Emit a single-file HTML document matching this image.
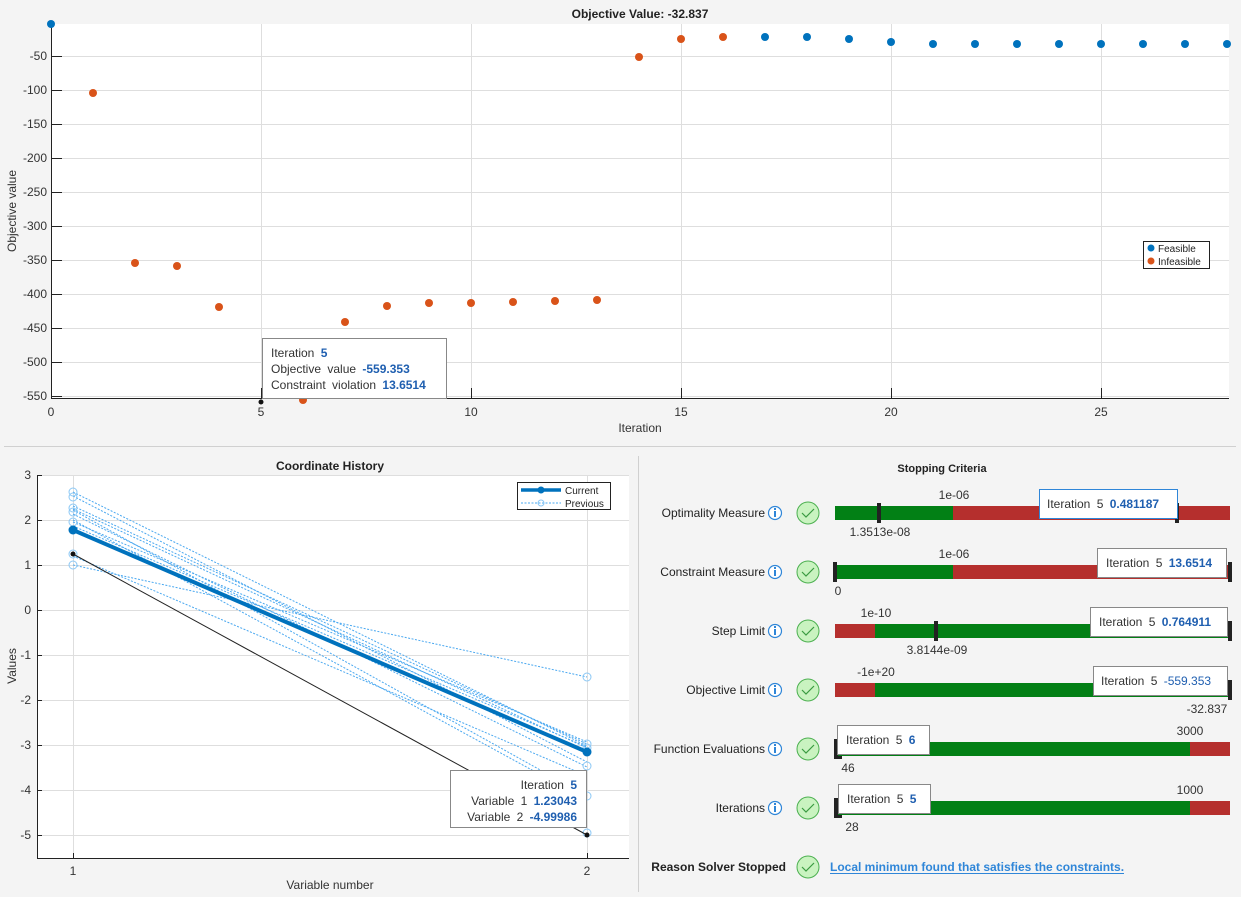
<!DOCTYPE html>
<html><head><meta charset="utf-8"><style>
html,body{margin:0;padding:0;background:#f4f4f4;}
svg{display:block;font-family:"Liberation Sans",Arial,sans-serif;}
.tt{word-spacing:3px;}
</style></head><body>
<svg width="1241" height="897" viewBox="0 0 1241 897" xmlns="http://www.w3.org/2000/svg">
<rect width="1241" height="897" fill="#f4f4f4"/>
<!-- TOP PLOT -->
<text x="640" y="18" font-size="12" font-weight="bold" text-anchor="middle" fill="#222">Objective Value: -32.837</text>
<rect x="51" y="24" width="1178" height="374" fill="#fff"/>
<g stroke="#dedede" stroke-width="1">
<line x1="51" x2="1229" y1="56.5" y2="56.5"/><line x1="51" x2="1229" y1="90.5" y2="90.5"/><line x1="51" x2="1229" y1="124.5" y2="124.5"/><line x1="51" x2="1229" y1="158.5" y2="158.5"/><line x1="51" x2="1229" y1="192.5" y2="192.5"/><line x1="51" x2="1229" y1="226.5" y2="226.5"/><line x1="51" x2="1229" y1="260.5" y2="260.5"/><line x1="51" x2="1229" y1="294.5" y2="294.5"/><line x1="51" x2="1229" y1="328.5" y2="328.5"/><line x1="51" x2="1229" y1="362.5" y2="362.5"/><line x1="51" x2="1229" y1="396.5" y2="396.5"/>
<line x1="261.5" x2="261.5" y1="24" y2="398"/><line x1="471.5" x2="471.5" y1="24" y2="398"/><line x1="681.5" x2="681.5" y1="24" y2="398"/><line x1="891.5" x2="891.5" y1="24" y2="398"/><line x1="1101.5" x2="1101.5" y1="24" y2="398"/>
</g>
<g stroke="#222" stroke-width="1">
<line x1="51.5" x2="51.5" y1="24" y2="398"/><line x1="51" x2="1229" y1="398.5" y2="398.5"/>
<line x1="51" x2="62" y1="56.5" y2="56.5"/><line x1="51" x2="62" y1="90.5" y2="90.5"/><line x1="51" x2="62" y1="124.5" y2="124.5"/><line x1="51" x2="62" y1="158.5" y2="158.5"/><line x1="51" x2="62" y1="192.5" y2="192.5"/><line x1="51" x2="62" y1="226.5" y2="226.5"/><line x1="51" x2="62" y1="260.5" y2="260.5"/><line x1="51" x2="62" y1="294.5" y2="294.5"/><line x1="51" x2="62" y1="328.5" y2="328.5"/><line x1="51" x2="62" y1="362.5" y2="362.5"/><line x1="51" x2="62" y1="396.5" y2="396.5"/>
<line x1="261.5" x2="261.5" y1="388" y2="398"/><line x1="471.5" x2="471.5" y1="388" y2="398"/><line x1="681.5" x2="681.5" y1="388" y2="398"/><line x1="891.5" x2="891.5" y1="388" y2="398"/><line x1="1101.5" x2="1101.5" y1="388" y2="398"/>
</g>
<g font-size="12" fill="#333" text-anchor="end">
<text x="47" y="60">-50</text><text x="47" y="94">-100</text><text x="47" y="128">-150</text><text x="47" y="162">-200</text><text x="47" y="196">-250</text><text x="47" y="230">-300</text><text x="47" y="264">-350</text><text x="47" y="298">-400</text><text x="47" y="332">-450</text><text x="47" y="366">-500</text><text x="47" y="400">-550</text>
</g>
<g font-size="12" fill="#333" text-anchor="middle">
<text x="51" y="416">0</text><text x="261" y="416">5</text><text x="471" y="416">10</text><text x="681" y="416">15</text><text x="891" y="416">20</text><text x="1101" y="416">25</text>
<text x="640" y="432">Iteration</text>
</g>
<text transform="translate(16,211) rotate(-90)" font-size="12" fill="#333" text-anchor="middle">Objective value</text>
<g fill="#d95319">
<circle cx="93" cy="93" r="4"/><circle cx="135" cy="263" r="4"/><circle cx="177" cy="266" r="4"/><circle cx="219" cy="307" r="4"/><circle cx="303" cy="400" r="4"/><circle cx="345" cy="322" r="4"/><circle cx="387" cy="306" r="4"/><circle cx="429" cy="303" r="4"/><circle cx="471" cy="303" r="4"/><circle cx="513" cy="302" r="4"/><circle cx="555" cy="301" r="4"/><circle cx="597" cy="300" r="4"/><circle cx="639" cy="57" r="4"/><circle cx="681" cy="39" r="4"/><circle cx="723" cy="37" r="4"/>
</g>
<g fill="#0072bd">
<circle cx="51" cy="24" r="4"/><circle cx="765" cy="37" r="4"/><circle cx="807" cy="37" r="4"/><circle cx="849" cy="39" r="4"/><circle cx="891" cy="42" r="4"/><circle cx="933" cy="44" r="4"/><circle cx="975" cy="44" r="4"/><circle cx="1017" cy="44" r="4"/><circle cx="1059" cy="44" r="4"/><circle cx="1101" cy="44" r="4"/><circle cx="1143" cy="44" r="4"/><circle cx="1185" cy="44" r="4"/><circle cx="1227" cy="44" r="4"/>
</g>
<rect x="1143.5" y="241.5" width="66" height="27" fill="#fff" stroke="#222"/>
<circle cx="1151" cy="248" r="3.5" fill="#0072bd"/><circle cx="1151" cy="261" r="3.5" fill="#d95319"/>
<text x="1158" y="252" font-size="10" fill="#222">Feasible</text><text x="1158" y="265" font-size="10" fill="#222">Infeasible</text>
<rect x="262.5" y="338.5" width="184" height="60" fill="#fff" stroke="#888"/>
<g font-size="12" fill="#333" class="tt"><text x="271" y="357">Iteration <tspan fill="#1f5fb0" font-weight="bold">5</tspan></text><text x="271" y="373">Objective value <tspan fill="#1f5fb0" font-weight="bold">-559.353</tspan></text><text x="271" y="389">Constraint violation <tspan fill="#1f5fb0" font-weight="bold">13.6514</tspan></text></g>
<circle cx="261" cy="402" r="2.5" fill="#111"/>
<line x1="4" x2="1236" y1="446.5" y2="446.5" stroke="#d0d0d0"/>
<line x1="638.5" x2="638.5" y1="456" y2="892" stroke="#d0d0d0"/>
<!-- COORDINATE HISTORY -->
<text x="330" y="470" font-size="12" font-weight="bold" fill="#222" text-anchor="middle">Coordinate History</text>
<rect x="37" y="475" width="592" height="383" fill="#fff"/>
<g stroke="#dedede">
<line x1="37" x2="629" y1="520.5" y2="520.5"/><line x1="37" x2="629" y1="565.5" y2="565.5"/><line x1="37" x2="629" y1="610.5" y2="610.5"/><line x1="37" x2="629" y1="655.5" y2="655.5"/><line x1="37" x2="629" y1="700.5" y2="700.5"/><line x1="37" x2="629" y1="745.5" y2="745.5"/><line x1="37" x2="629" y1="790.5" y2="790.5"/><line x1="37" x2="629" y1="835.5" y2="835.5"/><line x1="37" x2="629" y1="475.5" y2="475.5"/>
<line x1="73.5" x2="73.5" y1="475" y2="858"/><line x1="587.5" x2="587.5" y1="475" y2="858"/>
</g>
<g stroke="#222"><line x1="37.5" x2="37.5" y1="475" y2="858"/><line x1="37" x2="629" y1="858.5" y2="858.5"/>
<line x1="37" x2="42" y1="475.5" y2="475.5"/><line x1="37" x2="42" y1="520.5" y2="520.5"/><line x1="37" x2="42" y1="565.5" y2="565.5"/><line x1="37" x2="42" y1="610.5" y2="610.5"/><line x1="37" x2="42" y1="655.5" y2="655.5"/><line x1="37" x2="42" y1="700.5" y2="700.5"/><line x1="37" x2="42" y1="745.5" y2="745.5"/><line x1="37" x2="42" y1="790.5" y2="790.5"/><line x1="37" x2="42" y1="835.5" y2="835.5"/>
<line x1="73.5" x2="73.5" y1="853" y2="858"/><line x1="587.5" x2="587.5" y1="853" y2="858"/></g>
<g font-size="12" fill="#333" text-anchor="end"><text x="31" y="479">3</text><text x="31" y="524">2</text><text x="31" y="569">1</text><text x="31" y="614">0</text><text x="31" y="659">-1</text><text x="31" y="704">-2</text><text x="31" y="749">-3</text><text x="31" y="794">-4</text><text x="31" y="839">-5</text></g>
<g font-size="12" fill="#333" text-anchor="middle"><text x="73" y="875">1</text><text x="587" y="875">2</text><text x="330" y="889">Variable number</text></g>
<text transform="translate(16,666) rotate(-90)" font-size="12" fill="#333" text-anchor="middle">Values</text>
<g stroke="#4aa8f0" stroke-width="1" stroke-dasharray="2,1.5" fill="none">
<line x1="73" y1="492" x2="587" y2="746"/><line x1="73" y1="496" x2="587" y2="762"/><line x1="73" y1="506" x2="587" y2="744"/><line x1="73" y1="509" x2="587" y2="748"/><line x1="73" y1="514" x2="587" y2="767"/><line x1="73" y1="522" x2="587" y2="742"/><line x1="73" y1="526" x2="587" y2="747"/><line x1="73" y1="556" x2="587" y2="776"/><line x1="73" y1="565" x2="587" y2="677"/><line x1="73" y1="510" x2="587" y2="796"/><line x1="73" y1="520" x2="587" y2="800"/>
</g>
<g stroke="#8cc8f5" fill="none"><circle cx="73" cy="492" r="4"/><circle cx="73" cy="497" r="4"/><circle cx="73" cy="508" r="4"/><circle cx="73" cy="512" r="4"/><circle cx="73" cy="522" r="4"/><circle cx="73" cy="554" r="4"/><circle cx="73" cy="565" r="4"/><circle cx="587" cy="677" r="4"/><circle cx="587" cy="744" r="4"/><circle cx="587" cy="748" r="4"/><circle cx="587" cy="766" r="4"/><circle cx="587" cy="796" r="4"/><circle cx="587" cy="833" r="4"/></g>
<line x1="73" y1="554" x2="587" y2="835" stroke="#222" stroke-width="1"/>
<line x1="73" y1="530" x2="587" y2="752" stroke="#0072bd" stroke-width="4"/>
<circle cx="73" cy="530" r="4.5" fill="#0072bd"/><circle cx="587" cy="752" r="4.5" fill="#0072bd"/>
<circle cx="73" cy="554" r="2.5" fill="#111"/><circle cx="587" cy="835" r="2.5" fill="#111"/>
<rect x="517.5" y="482.5" width="93" height="27" fill="#fff" stroke="#222"/>
<line x1="521" x2="561" y1="490" y2="490" stroke="#0072bd" stroke-width="3.5"/><circle cx="541" cy="490" r="3.5" fill="#0072bd"/>
<line x1="521" x2="561" y1="503" y2="503" stroke="#4aa8f0" stroke-dasharray="2,1.5"/><circle cx="541" cy="503" r="3" fill="none" stroke="#8cc8f5"/>
<text x="565" y="494" font-size="10" fill="#222">Current</text><text x="565" y="507" font-size="10" fill="#222">Previous</text>
<rect x="450.5" y="770.5" width="136" height="57" fill="#fff" stroke="#888"/>
<g font-size="12" fill="#333" text-anchor="end" class="tt"><text x="577" y="789">Iteration <tspan fill="#1f5fb0" font-weight="bold">5</tspan></text><text x="577" y="805">Variable 1 <tspan fill="#1f5fb0" font-weight="bold">1.23043</tspan></text><text x="577" y="821">Variable 2 <tspan fill="#1f5fb0" font-weight="bold">-4.99986</tspan></text></g>
<!-- STOPPING CRITERIA -->
<text x="942" y="472" font-size="11" font-weight="bold" fill="#222" text-anchor="middle">Stopping Criteria</text>
<g font-size="12" fill="#222" text-anchor="end">
<text x="765" y="517">Optimality Measure</text><text x="765" y="576">Constraint Measure</text><text x="765" y="635">Step Limit</text><text x="765" y="694">Objective Limit</text><text x="765" y="753">Function Evaluations</text><text x="765" y="812">Iterations</text>
<text x="786" y="871" font-weight="bold">Reason Solver Stopped</text>
</g>
<g>
<g stroke="#2f86d8" fill="#fff" stroke-width="1.2"><circle cx="775" cy="513" r="6.5"/><circle cx="775" cy="572" r="6.5"/><circle cx="775" cy="631" r="6.5"/><circle cx="775" cy="690" r="6.5"/><circle cx="775" cy="749" r="6.5"/><circle cx="775" cy="808" r="6.5"/></g>
<g fill="#2f86d8"><rect x="774" y="511" width="2" height="6"/><rect x="774" y="508" width="2" height="2"/><rect x="774" y="570" width="2" height="6"/><rect x="774" y="567" width="2" height="2"/><rect x="774" y="629" width="2" height="6"/><rect x="774" y="626" width="2" height="2"/><rect x="774" y="688" width="2" height="6"/><rect x="774" y="685" width="2" height="2"/><rect x="774" y="747" width="2" height="6"/><rect x="774" y="744" width="2" height="2"/><rect x="774" y="806" width="2" height="6"/><rect x="774" y="803" width="2" height="2"/></g>
</g>
<g stroke="#4cb050" fill="#c9f3c0" stroke-width="1"><circle cx="808" cy="513" r="11"/><circle cx="808" cy="572" r="11"/><circle cx="808" cy="631" r="11"/><circle cx="808" cy="690" r="11"/><circle cx="808" cy="749" r="11"/><circle cx="808" cy="808" r="11"/><circle cx="808" cy="867" r="11"/></g>
<g stroke="#3a9a40" fill="none" stroke-width="1.2"><path d="M802 513l4 4 8-8"/><path d="M802 572l4 4 8-8"/><path d="M802 631l4 4 8-8"/><path d="M802 690l4 4 8-8"/><path d="M802 749l4 4 8-8"/><path d="M802 808l4 4 8-8"/><path d="M802 867l4 4 8-8"/></g>
<!-- bars -->
<rect x="835" y="506" width="118" height="14" fill="#028015"/><rect x="953" y="506" width="277" height="14" fill="#b52f2d"/>
<rect x="835" y="565" width="118" height="14" fill="#028015"/><rect x="953" y="565" width="277" height="14" fill="#b52f2d"/>
<rect x="835" y="624" width="40" height="14" fill="#b52f2d"/><rect x="875" y="624" width="355" height="14" fill="#028015"/>
<rect x="835" y="683" width="40" height="14" fill="#b52f2d"/><rect x="875" y="683" width="355" height="14" fill="#028015"/>
<rect x="835" y="742" width="355" height="14" fill="#028015"/><rect x="1190" y="742" width="40" height="14" fill="#b52f2d"/>
<rect x="835" y="801" width="355" height="14" fill="#028015"/><rect x="1190" y="801" width="40" height="14" fill="#b52f2d"/>
<g fill="#222">
<rect x="877" y="503" width="4" height="20"/><rect x="1175" y="503" width="4" height="20"/>
<rect x="833" y="562" width="4" height="20"/><rect x="1228" y="562" width="4" height="20"/>
<rect x="934" y="621" width="4" height="20"/><rect x="1228" y="621" width="4" height="20"/>
<rect x="1228" y="680" width="4" height="20"/>
<rect x="834" y="739" width="4" height="20"/><rect x="834" y="756" width="8" height="3"/>
<rect x="834" y="798" width="4" height="20"/><rect x="834" y="815" width="8" height="3"/>
</g>
<g font-size="12" fill="#333" text-anchor="middle">
<text x="954" y="499">1e-06</text><text x="880" y="536">1.3513e-08</text>
<text x="954" y="558">1e-06</text><text x="838" y="595">0</text>
<text x="876" y="617">1e-10</text><text x="937" y="654">3.8144e-09</text>
<text x="876" y="676">-1e+20</text><text x="1207" y="713">-32.837</text>
<text x="1190" y="735">3000</text><text x="848" y="772">46</text>
<text x="1190" y="794">1000</text><text x="852" y="831">28</text>
</g>
<g font-size="12" fill="#333" class="tt">
<rect x="1039.5" y="489.5" width="138" height="29" fill="#fff" stroke="#2f86d8"/><text x="1047" y="508">Iteration 5 <tspan fill="#1f5fb0" font-weight="bold">0.481187</tspan></text>
<rect x="1097.5" y="548.5" width="129" height="29" fill="#fff" stroke="#888"/><text x="1106" y="567">Iteration 5 <tspan fill="#1f5fb0" font-weight="bold">13.6514</tspan></text>
<rect x="1090.5" y="607.5" width="137" height="29" fill="#fff" stroke="#888"/><text x="1099" y="626">Iteration 5 <tspan fill="#1f5fb0" font-weight="bold">0.764911</tspan></text>
<rect x="1093.5" y="666.5" width="134" height="29" fill="#fff" stroke="#888"/><text x="1101" y="685">Iteration 5 <tspan fill="#1f5fb0">-559.353</tspan></text>
<rect x="837.5" y="725.5" width="92" height="29" fill="#fff" stroke="#888"/><text x="846" y="744">Iteration 5 <tspan fill="#1f5fb0" font-weight="bold">6</tspan></text>
<rect x="838.5" y="784.5" width="92" height="29" fill="#fff" stroke="#888"/><text x="847" y="803">Iteration 5 <tspan fill="#1f5fb0" font-weight="bold">5</tspan></text>
</g>
<text x="830" y="871" font-size="12" font-weight="bold" fill="#2f86d8">Local minimum found that satisfies the constraints.</text>
<line x1="830" x2="1124" y1="873.5" y2="873.5" stroke="#2f86d8"/>
</svg>
</body></html>
